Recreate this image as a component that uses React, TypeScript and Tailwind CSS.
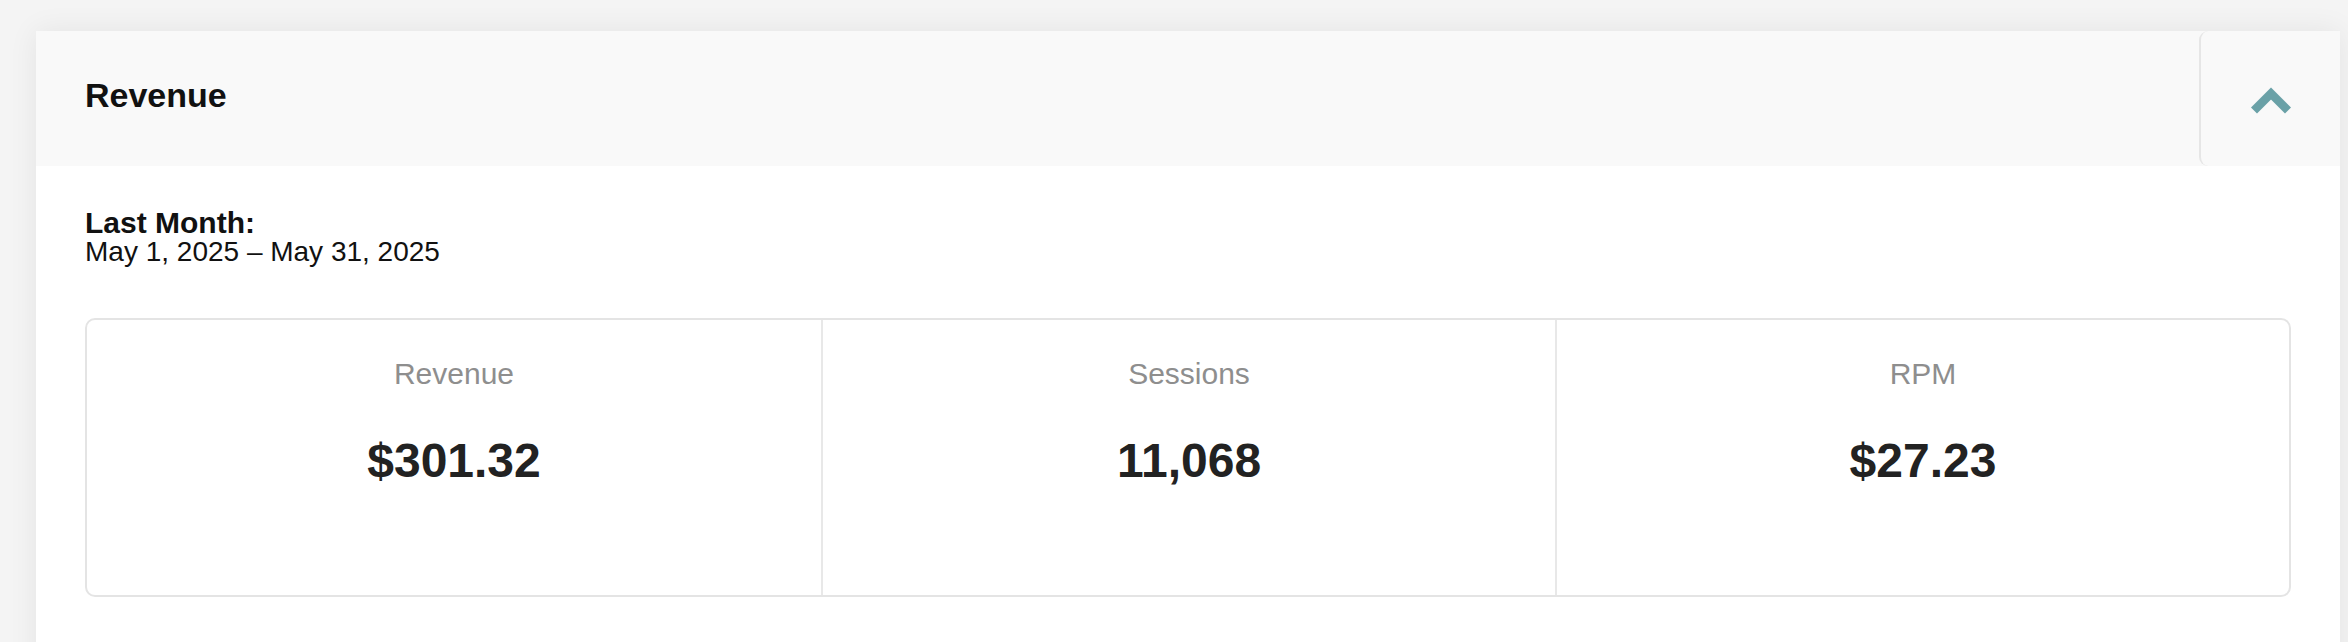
import React from 'react';

const stats = [
  { label: 'Revenue', value: '$301.32' },
  { label: 'Sessions', value: '11,068' },
  { label: 'RPM', value: '$27.23' },
];

const App = () => {
  return (
    <div className="min-h-screen bg-[#f4f4f4] pt-[31px] pl-[36px] pr-[8px] font-['Liberation_Sans',Arial,sans-serif] overflow-hidden h-[642px]">
      <div className="bg-white shadow-[0_0_28px_rgba(0,0,0,0.07)] pb-[80px]">
        {/* header */}
        <div className="flex h-[135px] bg-[#f9f9f9]">
          <div className="flex flex-1 items-center pl-[49px] pb-[8px]">
            <h2 className="text-[34px] leading-[34px] font-bold text-[#111]">Revenue</h2>
          </div>
          <button className="flex w-[141px] items-center justify-center rounded-l-[9px] border-l-2 border-[#e6e6e6] bg-[#f9f9f9]">
            <svg width="40" height="28" viewBox="0 0 40 28" className="mt-[4px]">
              <polyline
                points="3,23.5 20,6.5 37,23.5"
                fill="none"
                stroke="#6aa1a7"
                strokeWidth="8.5"
                strokeLinecap="butt"
                strokeLinejoin="miter"
              />
            </svg>
          </button>
        </div>

        {/* body */}
        <div className="px-[49px] pt-[42px]">
          <div className="text-[30px] leading-[29px] font-bold text-[#111]">Last Month:</div>
          <div className="text-[28px] leading-[29px] text-[#111]">May 1, 2025 – May 31, 2025</div>

          <div className="mt-[52px] grid h-[279px] grid-cols-3 rounded-[10px] border-2 border-[#e4e4e4]">
            {stats.map((s, i) => (
              <div
                key={s.label}
                className={`flex flex-col items-center pt-[37px] ${i > 0 ? 'border-l-2 border-[#e8e8e8]' : ''}`}
              >
                <div className="text-[30px] leading-[33px] text-[#8e8e8e]">{s.label}</div>
                <div className="mt-[45px] text-[48px] leading-[52px] font-bold text-[#222]">{s.value}</div>
              </div>
            ))}
          </div>
        </div>
      </div>
    </div>
  );
};

export default App;
